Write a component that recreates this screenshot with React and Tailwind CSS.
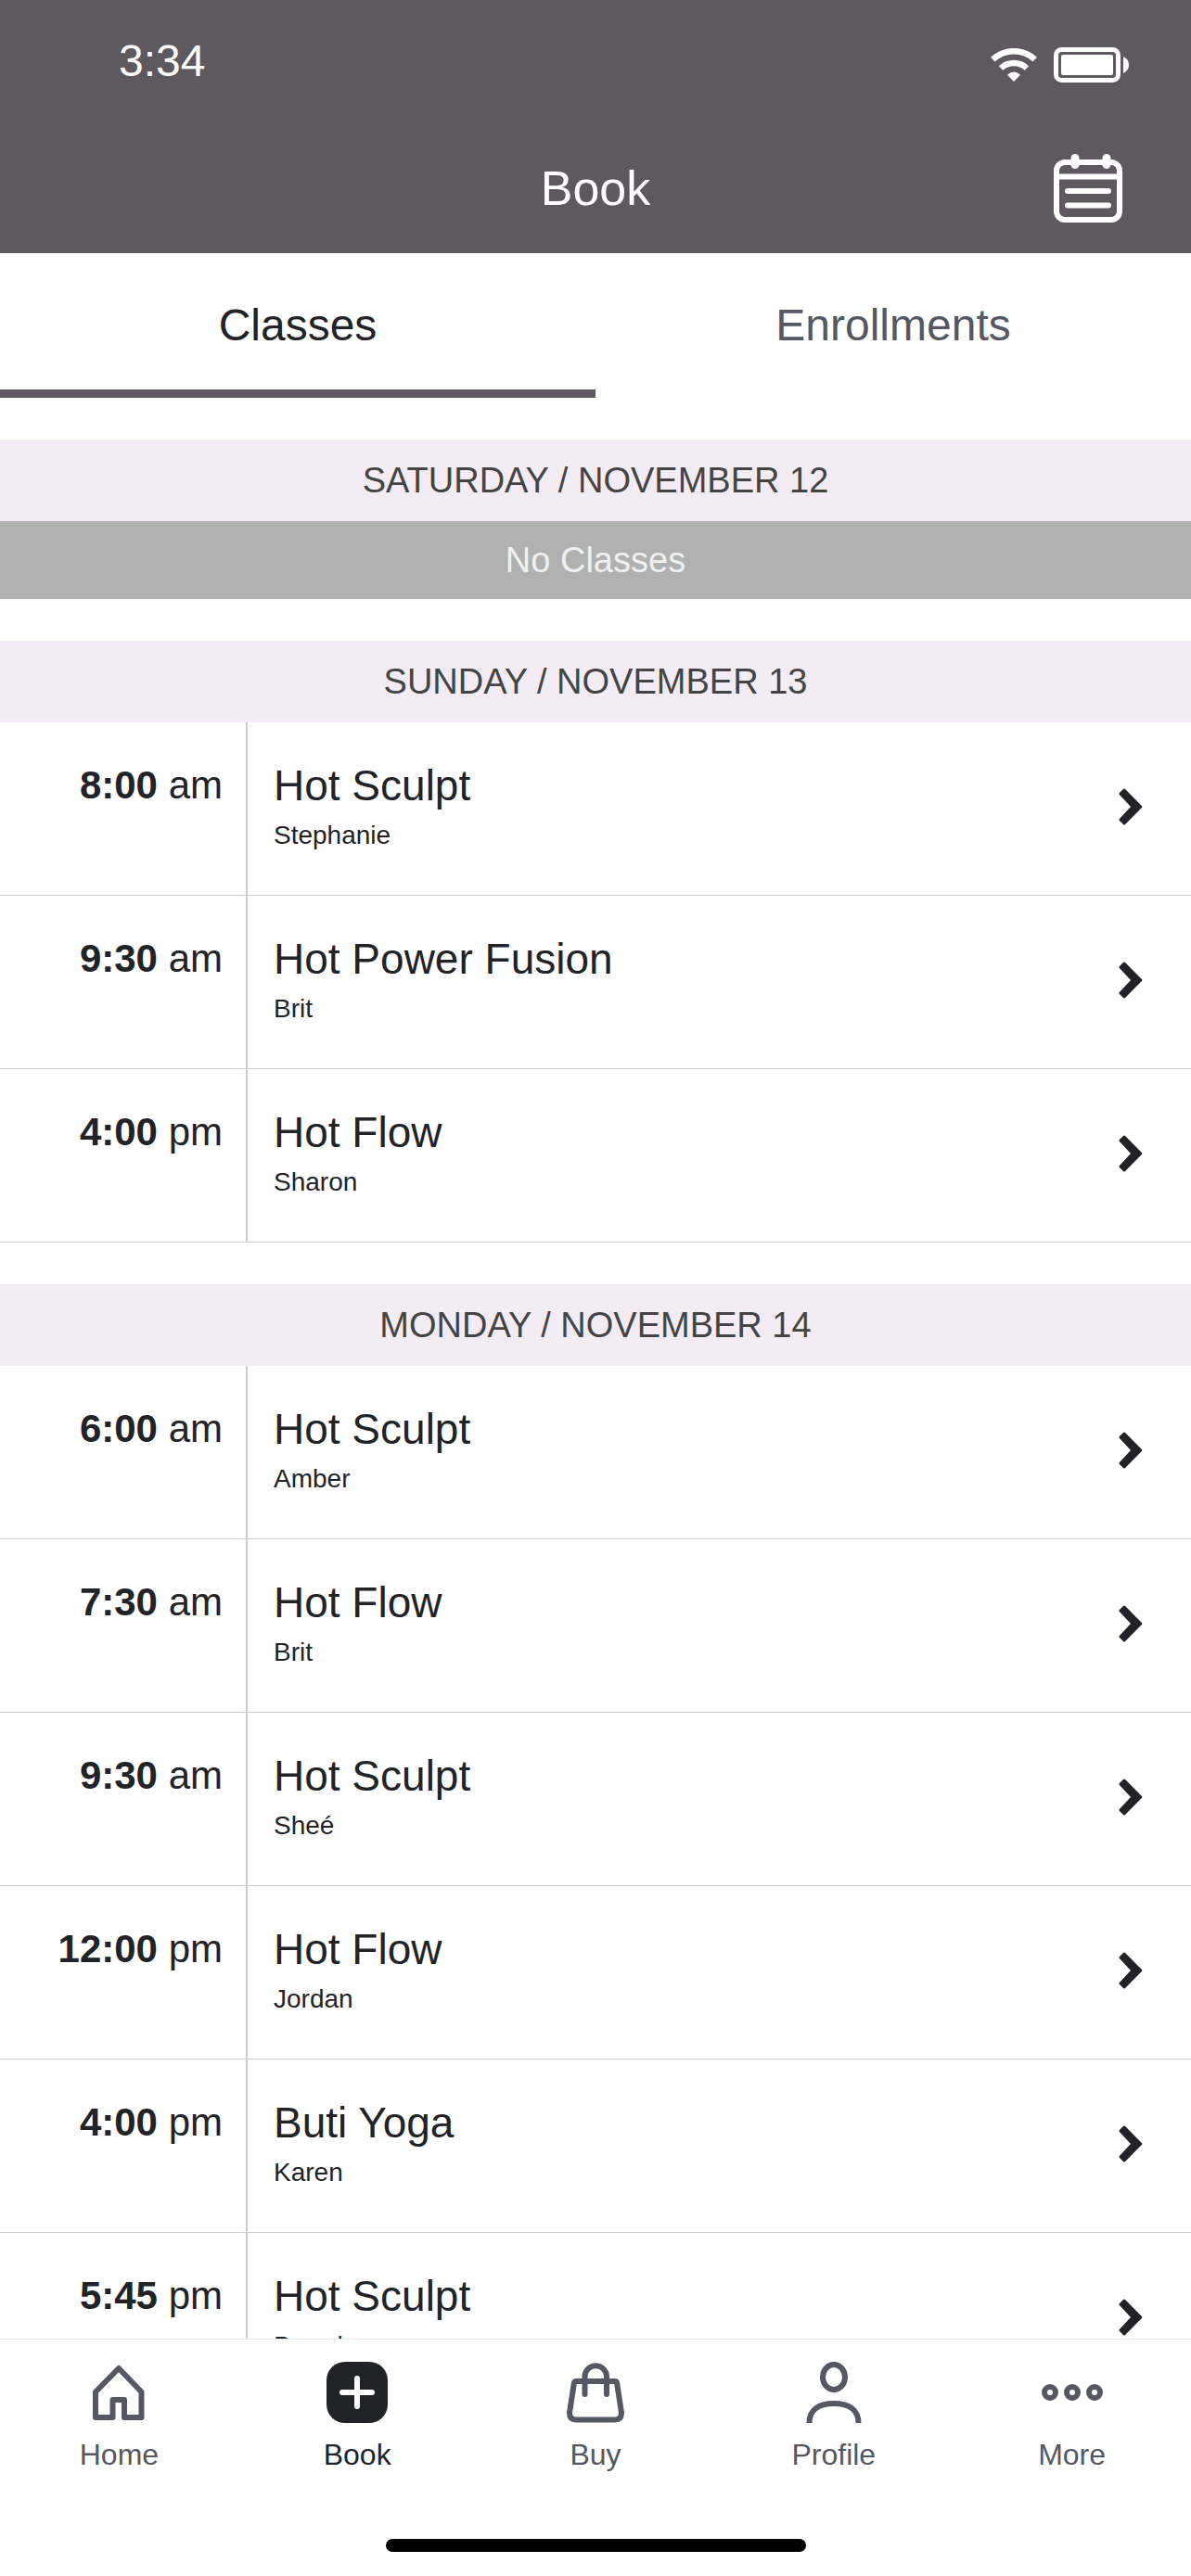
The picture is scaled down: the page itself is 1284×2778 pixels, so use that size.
import { useState } from "react";

const schedule = [
  { day: "Saturday", date: "November 12", classes: [] },
  {
    day: "Sunday",
    date: "November 13",
    classes: [
      { time: "8:00", period: "am", name: "Hot Sculpt", teacher: "Stephanie" },
      { time: "9:30", period: "am", name: "Hot Power Fusion", teacher: "Brit" },
      { time: "4:00", period: "pm", name: "Hot Flow", teacher: "Sharon" },
    ],
  },
  {
    day: "Monday",
    date: "November 14",
    classes: [
      { time: "6:00", period: "am", name: "Hot Sculpt", teacher: "Amber" },
      { time: "7:30", period: "am", name: "Hot Flow", teacher: "Brit" },
      { time: "9:30", period: "am", name: "Hot Sculpt", teacher: "Sheé" },
      { time: "12:00", period: "pm", name: "Hot Flow", teacher: "Jordan" },
      { time: "4:00", period: "pm", name: "Buti Yoga", teacher: "Karen" },
      { time: "5:45", period: "pm", name: "Hot Sculpt", teacher: "Brandy" },
    ],
  },
];

const iconProps = {
  viewBox: "0 0 66 66",
  className: "size-[66px]",
  fill: "none",
  stroke: "currentColor",
  strokeWidth: 6,
  strokeLinecap: "round",
  strokeLinejoin: "round",
  "aria-hidden": true,
};

const HomeIcon = () => (
  <svg {...iconProps}>
    <path d="M33 7 57.5 32.5V60H39V41H26.5V60H8V32.5Z" />
  </svg>
);

const BookIcon = () => (
  <svg {...iconProps}>
    <rect width="66" height="66" rx="20" fill="currentColor" stroke="none" />
    <path d="M33 18v30M17 33h32" stroke="white" />
  </svg>
);

const BuyIcon = () => (
  <svg {...iconProps}>
    <path d="M12.500 21h41q2.500 0 2.700 2.500L61 55q0 7.500-7 7.500H12q-7 0-7-7.500L9.800 23.500Q10 21 12.500 21Z" />
    <path d="M21.500 35V15a11.800 11.800 0 0 1 23.500 0V35" />
  </svg>
);

const ProfileIcon = () => (
  <svg {...iconProps} strokeLinecap="butt">
    <ellipse cx="33" cy="16.500" rx="12" ry="13.500" />
    <path d="M6.500 66C6.500 52 16 45 33 45s26.500 7 26.500 21" />
  </svg>
);

const MoreIcon = () => (
  <svg {...iconProps}>
    <circle cx="9" cy="33" r="6" />
    <circle cx="33" cy="33" r="6" />
    <circle cx="57" cy="33" r="6" />
  </svg>
);

const navItems = [
  { label: "Home", Icon: HomeIcon },
  { label: "Book", Icon: BookIcon },
  { label: "Buy", Icon: BuyIcon },
  { label: "Profile", Icon: ProfileIcon },
  { label: "More", Icon: MoreIcon },
];

function StatusBar() {
  return (
    <div className="flex h-[132px] items-center justify-between pl-32 pr-[67px]">
      <span className="text-[48px] leading-[54px]">3:34</span>
      <div className="mt-2 flex items-center gap-[18px]">
        <svg viewBox="0 0 50 36" className="h-9 w-[50px]" fill="none" stroke="currentColor" strokeWidth="6.500" aria-hidden="true">
          <path d="M2.300 12.200a33 33 0 0 1 45.400 0" />
          <path d="M11 21.500a20.500 20.500 0 0 1 28 0" />
          <path d="M18 28.800q7-6.400 14 0L25 36Z" fill="currentColor" stroke="none" />
        </svg>
        <svg viewBox="0 0 81 38" className="h-[38px] w-[81px]" fill="none" aria-hidden="true">
          <rect x="2.500" y="2.500" width="67" height="33" rx="6" stroke="currentColor" strokeWidth="5" />
          <rect x="8" y="8" width="56" height="22" rx="2" fill="currentColor" />
          <path d="M75 10q6 3 6 9t-6 9Z" fill="currentColor" />
        </svg>
      </div>
    </div>
  );
}

function ClassRow({ time, period, name, teacher }) {
  return (
    <li className="border-b border-[#cbced4]">
      <a href="#class" className="flex">
        <div className="w-[267px] shrink-0 border-r-2 border-[#cbced4] pr-[25px] pt-[42px] text-right text-[42px] leading-[52px]">
          <strong>{time}</strong> {period}
        </div>
        <div className="flex-1 pb-12 pl-7 pt-[42px]">
          <h3 className="text-[46px] leading-[52px]">{name}</h3>
          <p className="mt-3 text-[28px] leading-8">{teacher}</p>
        </div>
        <div className="flex items-center pb-1 pr-[52px]">
          <svg viewBox="0 0 26 40" className="h-10 w-[26px]" fill="currentColor" stroke="currentColor" strokeWidth="3" strokeLinejoin="round" aria-hidden="true">
            <path d="M6 2 23.800 20 6 38 2 34 15 20 2 6Z" />
          </svg>
        </div>
      </a>
    </li>
  );
}

export default function App() {
  const [tab, setTab] = useState("Classes");
  const [page, setPage] = useState("Book");

  return (
    <div className="flex h-screen flex-col bg-white font-['Liberation_Sans',Arial,sans-serif] text-[#222327]">
      <header className="shrink-0 bg-[#5e595e] text-white">
        <StatusBar />
        <div className="grid h-[141px] grid-cols-[1fr_auto_1fr] items-center px-[74px]">
          <h1 className="col-start-2 text-[52px] leading-[60px]">Book</h1>
          <button aria-label="Calendar" className="justify-self-end">
            <svg viewBox="0 0 74 74" className="size-[74px]" fill="none" stroke="currentColor" strokeWidth="6" strokeLinecap="round" aria-hidden="true">
              <rect x="3" y="9" width="68" height="62" rx="9" />
              <path d="M6 24.500h62" strokeLinecap="butt" />
              <path d="M15 40h44M15 55.500h44" />
              <path d="M23 4.500v7M57 4.500v7" strokeWidth="9" />
            </svg>
          </button>
        </div>
      </header>

      <div role="tablist" className="flex shrink-0">
        {["Classes", "Enrollments"].map((item) => (
          <button
            key={item}
            role="tab"
            aria-selected={tab === item}
            onClick={() => setTab(item)}
            className={`h-[156px] flex-1 border-b-9 pt-2 text-[48px] leading-[54px] ${
              tab === item ? "border-[#5e595e]" : "border-transparent text-[#555862]"
            }`}
          >
            {item}
          </button>
        ))}
      </div>

      <main className="min-h-0 flex-1 overflow-hidden">
        {schedule.map(({ day, date, classes }) => (
          <section key={day} className="pt-[45px]">
            <h2 className="bg-[#f4ecf5] py-[23px] text-center text-[38px] uppercase leading-[42px] text-[#444444]">
              {day} / {date}
            </h2>
            {classes.length === 0 ? (
              <p className="bg-[#b1b1b1] py-[21px] text-center text-[38px] leading-[42px] text-[#f0f0f0]">
                No Classes
              </p>
            ) : (
              <ul>
                {classes.map((item) => (
                  <ClassRow key={item.time + item.period} {...item} />
                ))}
              </ul>
            )}
          </section>
        ))}
      </main>

      <footer className="shrink-0 border-t border-[#e9eaf0] bg-white">
        <nav className="grid grid-cols-5 pt-6">
          {navItems.map(({ label, Icon }) => (
            <button
              key={label}
              onClick={() => setPage(label)}
              className={`flex flex-col items-center gap-4 text-[32px] leading-9 ${
                page === label ? "text-[#222327]" : "text-[#555862]"
              }`}
            >
              <Icon />
              {label}
            </button>
          ))}
        </nav>
        <div className="mx-auto mb-[26px] mt-[73px] h-3.5 w-[453px] rounded-full bg-black" />
      </footer>
    </div>
  );
}
